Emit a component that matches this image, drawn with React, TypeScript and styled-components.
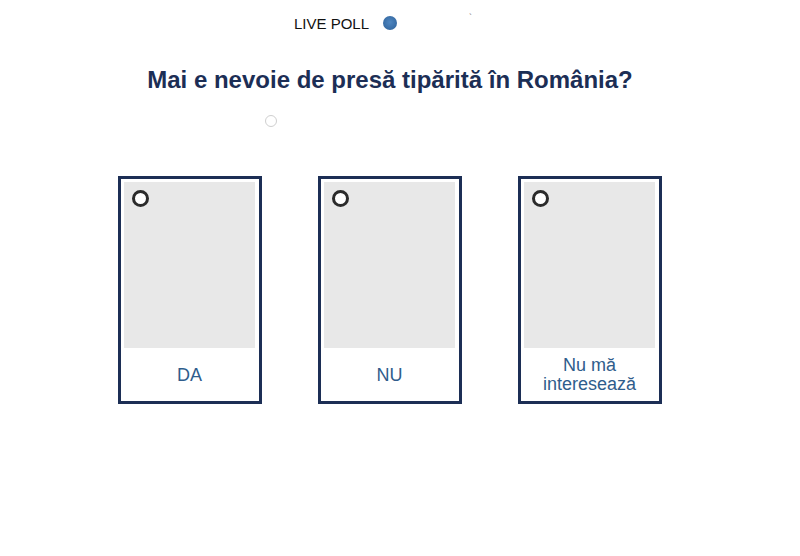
import React from "react";
import styled, { createGlobalStyle } from "styled-components";

const GlobalStyle = createGlobalStyle`
	body {
		margin: 0;
		background: #ffffff;
		font-family: "Liberation Sans", Arial, sans-serif;
	}
`;

const Page = styled.div`
	width: 780px;
	padding-top: 14px;
`;

const Header = styled.div`
	display: flex;
	align-items: center;
	height: 20px;
	padding-left: 294px;
	font-size: 15px;
	line-height: 20px;
	color: #111111;
`;

const Dot = styled.span`
	width: 14px;
	height: 14px;
	margin-left: 14px;
	margin-top: -3px;
	border-radius: 50%;
	background: radial-gradient(circle at 50% 45%, #4f86c0 0%, #3a6fa8 60%, #2f5f95 100%);
`;

const Tick = styled.span`
	margin-left: 72px;
	margin-top: -14px;
	font-size: 9px;
	color: #777777;
`;

const Title = styled.h1`
	margin: 32px 0 0;
	text-align: center;
	font-size: 24px;
	font-weight: bold;
	line-height: 28px;
	color: #1c2e55;
`;

const Marker = styled.div`
	width: 12px;
	height: 12px;
	margin: 21px 0 0 265px;
	border: 1px solid #cfcfcf;
	border-radius: 50%;
	box-sizing: border-box;
`;

const Options = styled.div`
	display: flex;
	justify-content: center;
	gap: 56px;
	margin-top: 49px;
`;

const Card = styled.div`
	width: 144px;
	height: 228px;
	box-sizing: border-box;
	border: 3px solid #1c2e55;
	padding: 3px 4px 3px 3px;
	display: flex;
	flex-direction: column;
	background: #ffffff;
`;

const Picture = styled.div`
	position: relative;
	height: 166px;
	background: #e8e8e8;
`;

const Radio = styled.span`
	position: absolute;
	left: 8px;
	top: 8px;
	width: 17px;
	height: 17px;
	box-sizing: border-box;
	border: 3px solid #2b2b2b;
	border-radius: 50%;
	background: #ffffff;
`;

const Label = styled.div`
	flex: 1;
	display: flex;
	align-items: center;
	justify-content: center;
	padding-top: 4px;
	text-align: center;
	font-size: 18px;
	line-height: 19px;
	color: #2f5d8c;
`;

const options = ["DA", "NU", "Nu mă interesează"];

function App() {
	return (
		<Page>
			<GlobalStyle />
			<Header>
				LIVE POLL
				<Dot />
				<Tick>`</Tick>
			</Header>
			<Title>Mai e nevoie de presă tipărită în România?</Title>
			<Marker />
			<Options>
				{options.map((o) => (
					<Card key={o}>
						<Picture>
							<Radio />
						</Picture>
						<Label>{o === "Nu mă interesează" ? <span>Nu mă<br />interesează</span> : o}</Label>
					</Card>
				))}
			</Options>
		</Page>
	);
}

export default App;
